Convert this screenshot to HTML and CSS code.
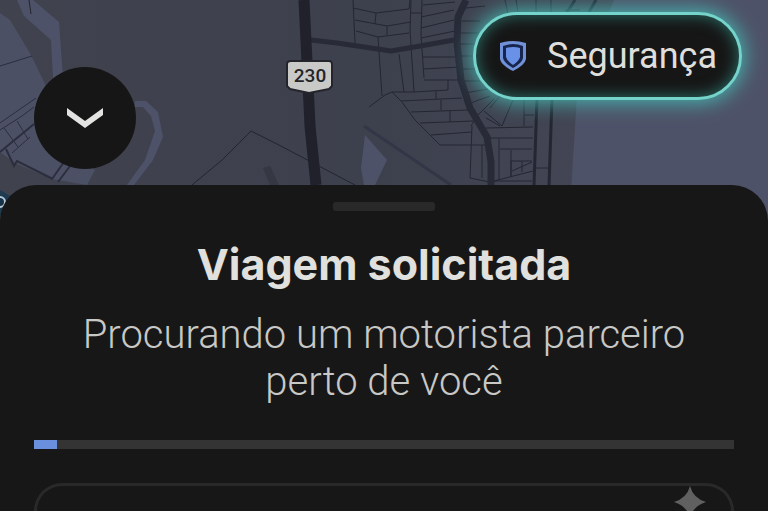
FILE: index.html
```html
<!DOCTYPE html>
<html lang="pt-BR">
<head>
    <meta charset="utf-8">
    <meta name="viewport" content="width=device-width, initial-scale=1.0">
    <title>Viagem solicitada</title>
    <link rel="stylesheet" href="styles.css">
</head>
<body>
    <header class="map-area">
        <svg class="map" viewBox="0 0 768 240" preserveAspectRatio="xMidYMin slice" aria-hidden="true">
            <defs>
                <linearGradient id="land" x1="0" x2="1" y1="0" y2="0">
                    <stop offset="0" stop-color="#40424e"/>
                    <stop offset="0.5" stop-color="#3d404d"/>
                    <stop offset="1" stop-color="#484a5a"/>
                </linearGradient>
            </defs>
            <rect width="768" height="240" fill="url(#land)"/>
            <!-- water -->
            <path fill="#4e5268" d="M614 0H768V240H568L577 95Z"/>
            <path fill="#4e5268" d="M17 0H33L59 22L63 78H53L51 40L24 16Z"/>
            <path fill="#4c5065" d="M0 13L10 20L31 55L45 84L68 150L95 170L87 185L52 179L15 163L0 152Z"/>
            <path fill="#4e5268" d="M135 101H146L158 112L163 137L153 160L134 185H127L145 160L155 131L151 116L143 107H135Z"/>
            <path fill="#4e5268" d="M365 135L387 160L375 185H364L361 168Z"/>
            <path fill="#353743" d="M263 168L270 166L279 185H270Z"/>
            <path fill="#1e3b50" d="M0 190L10 196L8 215L0 215Z"/>
            <!-- left side roads -->
            <g fill="none" stroke="#2c2e3d" stroke-width="1">
                <path d="M0 66L32 56M0 123L36 98M0 130L22 116L34 107M4 128L18 147M17 121L28 139M12 153L30 137"/>
                <path d="M52 179L64 162M58 182L70 166M0 152L34 124M6 149L14 166L17 161L53 179" stroke-width="2"/>
                <path d="M29 0L31 14M192 185L222 160L251 131L277 144L355 185" stroke="#22242f"/>
            </g>
            <!-- street grid -->
            <g fill="none" stroke="#242632" stroke-width="1">
                <path d="M353 0L355 43M353 8L376 13L409 9L410 0M376 13L375 24M355 20L387 26L411 22M387 26V35M356 31L378 37L409 33"/>
                <path d="M411 0L410 30L414 92M422 0L421 35L424 78M378 37L382 96M399 54L404 92M369 107L385 95L392 92H414L448 90V80"/>
                <path d="M423 5L455 2M411 13H421M421 17L454 10M421 28L454 20M421 38L455 31M422 57H458M423 69L460 67M424 80H462M436 91L436 99M401 101L462 98M441 100V110M411 112L468 110M450 111V122M420 123L473 121M431 135L472 132M440 145L486 145M392 92L402 102L415 120L440 145"/>
                <path d="M466 8L485 6M462 21H480M459 33H478M459 44H476M460 56H476M461 69H478M463 81H480M465 93L488 89M468 104L490 96M478 115L494 99"/>
                <path d="M505 0L508 14M516 0L518 12M536 0V12M551 0V12M565 10H580M484 111L502 126L513 100M490 108L500 96M500 126L486 118M486 128L533 127M524 98V126M524 115H534M488 138H533M472 126L470 178L490 182L533 171M482 145V178M499 139V180M511 150V177L511 161H532M500 149H532M522 161V172M512 171L532 162M493 181H532M536 168H549M471 126L476 118"/>
                <path d="M537 98L534 185M552 98L549 185" stroke-width="3"/>
                <path d="M575 0L566 14M596 0L589 12" stroke-width="3"/>
            </g>
            <!-- main roads -->
            <g fill="none" stroke="#282a37" stroke-linejoin="round">
                <path d="M311 40L337 43L391 51L420 46L454 40" stroke-width="5"/>
                <path d="M466 0L458 17L457 43L461 80L470 108L487 137L491 162V185" stroke-width="7"/>
                <path d="M364 126L451 185" stroke="#323646" stroke-width="3"/>
                <path d="M304 0L307 62L310 126L316 185" stroke="#20212b" stroke-width="11"/>
            </g>
            <!-- route badge -->
            <path d="M291 61H329Q332 61 332 64V86L329 89L309 93L290 89L287 86V64Q287 61 291 61Z" fill="#c9c9c7" stroke="#24252c" stroke-width="2"/>
            <text class="route-number" x="310" y="82" text-anchor="middle">230</text>
            <circle cx="0" cy="202" r="5" fill="#173247" stroke="#b7c9d8" stroke-width="2"/>
        </svg>
        <button class="collapse" type="button" aria-label="Minimizar">
            <svg viewBox="0 0 36 20" width="36" height="20" aria-hidden="true">
                <path d="M0 0L18 13L36 0V7L18 20L0 7Z" fill="#e3e3e1"/>
            </svg>
        </button>
        <button class="safety" type="button">
            <svg viewBox="0 0 28 32" width="28" height="32" aria-hidden="true">
                <path d="M14 1Q20 1 27 3V19Q26 25 14 31Q2 25 1 19V3Q8 1 14 1Z" fill="#7292d7"/>
                <path d="M14 4Q19 4 24 6V18Q23 23 14 28Q5 23 4 18V6Q9 4 14 4Z" fill="#17264e"/>
                <path d="M14 7Q18 7 21 8V17Q20 21 14 25Q8 21 7 17V8Q10 7 14 7Z" fill="#6991e8"/>
            </svg>
            Segurança
        </button>
    </header>
    <main class="sheet">
        <div class="handle"></div>
        <h1 class="title">Viagem solicitada</h1>
        <p class="status">Procurando um motorista parceiro perto de você</p>
        <div class="progress" role="progressbar" aria-label="Procurando motorista">
            <div class="progress-bar"></div>
        </div>
        <section class="card">
            <svg class="sparkle" viewBox="0 0 32 32" width="32" height="32" aria-hidden="true">
                <path d="M16 0Q19 12 32 16Q19 20 16 32Q13 20 0 16Q13 12 16 0Z" fill="#606060"/>
            </svg>
        </section>
    </main>
</body>
</html>
```

FILE: styles.css
```css
* {
    box-sizing: border-box;
}
body {
    margin: 0;
    height: 100vh;
    display: flex;
    flex-direction: column;
    overflow: hidden;
    background: #171717;
    font-family: Roboto, "Liberation Sans", sans-serif;
}
button {
    border: 0;
    color: #dededc;
    background: #161616;
    cursor: pointer;
}
.map-area {
    position: relative;
    display: flex;
    justify-content: space-between;
    align-items: flex-start;
    padding: 12px 26px 16px 34px;
}
.map {
    position: absolute;
    top: 0;
    left: 0;
    width: 100%;
    height: 240px;
}
.route-number {
    font-size: 19px;
    font-weight: 500;
    fill: #24252a;
}
.collapse {
    position: relative;
    display: flex;
    align-items: center;
    justify-content: center;
    width: 102px;
    height: 102px;
    margin-top: 55px;
    border-radius: 50%;
}
.safety {
    position: relative;
    display: flex;
    align-items: center;
    gap: 20px;
    height: 88px;
    padding: 0 22px 0 23px;
    border: 3px solid #74d3ca;
    border-radius: 44px;
    box-shadow: 0 0 20px 2px #45b9b2, inset 0 0 16px #2c746d;
    font-family: Roboto, "Liberation Sans", sans-serif;
    font-size: 36px;
}
.sheet {
    position: relative;
    display: flex;
    flex-direction: column;
    flex: 1;
    min-height: 0;
    padding: 17px 34px 0;
    border-radius: 36px 36px 0 0;
    background: #171717;
    text-align: center;
}
.handle {
    align-self: center;
    width: 102px;
    height: 9px;
    border-radius: 3px;
    background: #292929;
}
.title {
    margin: 26px 0 0;
    font-family: Inter, "Liberation Sans", sans-serif;
    font-size: 43px;
    line-height: 54px;
    font-weight: 700;
    color: #e0e0de;
}
.status {
    margin: 20px 0 0;
    padding: 0 40px;
    font-size: 40px;
    line-height: 47px;
    font-weight: 300;
    color: #c8c8c6;
}
.progress {
    height: 9px;
    margin-top: 35px;
    background: #343434;
}
.progress-bar {
    width: 23px;
    height: 9px;
    background: #6a8fdc;
}
/* runs off the bottom of the sheet */
.card {
    display: flex;
    flex: 1;
    justify-content: flex-end;
    min-height: 0;
    margin-top: 34px;
    padding-right: 25px;
    border: 3px solid #292929;
    border-bottom: 0;
    border-radius: 28px 28px 0 0;
    overflow: hidden;
}
.sparkle {
    flex: none;
}
```
